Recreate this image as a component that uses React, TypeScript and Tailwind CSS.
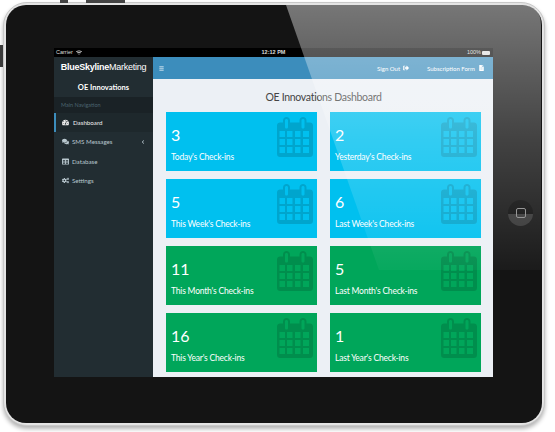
import React from "react";
import { FaBars, FaCogs, FaComments, FaFileAlt, FaTable, FaSignOutAlt, FaTachometerAlt, FaWifi, FaChevronLeft } from "react-icons/fa";

const cards = [
  { value: "3", label: "Today's Check-ins", blue: true },
  { value: "2", label: "Yesterday's Check-ins", blue: true },
  { value: "5", label: "This Week's Check-ins", blue: true },
  { value: "6", label: "Last Week's Check-ins", blue: true },
  { value: "11", label: "This Month's Check-ins", blue: false },
  { value: "5", label: "Last Month's Check-ins", blue: false },
  { value: "16", label: "This Year's Check-ins", blue: false },
  { value: "1", label: "Last Year's Check-ins", blue: false },
];

const navItems = [
  { label: "SMS Messages", icon: FaComments, arrow: true },
  { label: "Database", icon: FaTable, arrow: false },
  { label: "Settings", icon: FaCogs, arrow: false },
];

function CalendarIcon() {
  return (
    <svg viewBox="0 0 36 40" className="w-[36px] h-[40px] shrink-0 mt-[5px] mr-[4px]">
      <path
        fillRule="evenodd"
        fill="#000"
        fillOpacity="0.14"
        d="M6 5.5V3.5C6 1.5 7.5 0 9.5 0S13 1.5 13 3.5V5.5H22.5V3.5C22.5 1.5 24 0 26 0S29.5 1.5 29.5 3.5V5.5H33C34.7 5.5 36 6.8 36 8.5V37C36 38.7 34.7 40 33 40H3C1.3 40 0 38.7 0 37V8.5C0 6.8 1.3 5.5 3 5.5ZM8 3.5V10C8 11 8.7 11.5 9.5 11.5S11 11 11 10V3.5C11 2.5 10.3 2 9.5 2S8 2.5 8 3.5ZM24.5 3.5V10C24.5 11 25.2 11.5 26 11.5S27.5 11 27.5 10V3.5C27.5 2.5 26.8 2 26 2S24.5 2.5 24.5 3.5ZM2.5 14V20H8V14ZM10 14V20H15.5V14ZM18 14V20H23.5V14ZM26 14V20H32V14ZM2.5 22V28H8V22ZM10 22V28H15.5V22ZM18 22V28H23.5V22ZM26 22V28H32V22ZM2.5 30V36H8V30ZM10 30V36H15.5V30ZM18 30V36H23.5V30ZM26 30V36H32V30Z"
      />
    </svg>
  );
}

export default function App() {
  return (
    <div className="relative w-[555px] h-[432px] overflow-hidden bg-white">
      {/* side and top hardware buttons */}
      <div className="absolute left-0 top-[45px] w-[3px] h-[22px] bg-[#3a3a3a]" />
      <div className="absolute left-[60px] top-0 w-[8px] h-[3px] bg-[#444]" />
      <div className="absolute left-[86px] top-0 w-[39px] h-[3px] bg-[#444]" />

      <div className="ml-[3px] mt-[2px] w-[542px] h-[424px] rounded-[24px] bg-[#e4e4e4] border border-[#c8c8c8] p-[2px] shadow-[0_3px_4px_rgba(0,0,0,0.3)]">
        <div className="relative w-full h-full rounded-[20px] bg-[#141414] pl-[48px] pt-[43px]">
          <div className="w-[439px] flex flex-col text-white font-['Lato',sans-serif]">
            {/* status bar */}
            <div className="h-[9px] bg-black flex items-center justify-between px-[2px] text-[5.5px] leading-none text-[#ddd] font-['Liberation_Sans',sans-serif]">
              <div className="flex items-center gap-[3px] w-[100px]">
                Carrier <FaWifi className="w-[6px] h-[5px]" />
              </div>
              <span className="font-bold">12:12 PM</span>
              <div className="flex items-center justify-end gap-[1px] w-[100px] pr-[1px]">
                100%
                <span className="w-[8px] h-[4px] bg-[#ddd] rounded-[1px]" />
              </div>
            </div>

            <div className="flex h-[320px]">
              {/* sidebar */}
              <aside className="w-[99px] bg-[#222d32] flex flex-col shrink-0">
                <div className="h-[22px] flex items-center justify-center text-[9px] tracking-[-0.25px] font-['Liberation_Sans',sans-serif] whitespace-nowrap">
                  <b>BlueSkyline</b>
                  <span>Marketing</span>
                </div>
                <div className="h-[18px] flex items-center justify-center text-[7.5px] font-bold">
                  OE Innovations
                </div>
                <div className="h-[16px] flex items-center pl-[7px] bg-[#1a2226] text-[5.5px] text-[#4b646f]">
                  Main Navigation
                </div>
                <div className="h-[19px] flex items-center gap-[3px] pl-[6px] bg-[#1e282c] border-l-2 border-[#3c8dbc] text-[6.2px] text-[#f0f0f0]">
                  <FaTachometerAlt className="w-[7px] h-[7px]" />
                  <span className="ml-[1px]">Dashboard</span>
                </div>
                {navItems.map((item) => {
                  const Icon = item.icon;
                  return (
                    <div key={item.label} className="h-[19.5px] flex items-center gap-[3px] pl-[8px] pr-[8px] text-[6.2px] text-[#b8c7ce]">
                      <Icon className="w-[7px] h-[7px]" />
                      <span className="flex-1">{item.label}</span>
                      {item.arrow && <FaChevronLeft className="w-[4px] h-[4px]" />}
                    </div>
                  );
                })}
              </aside>

              {/* main */}
              <main className="flex-1 flex flex-col bg-[#ecf0f5]">
                <header className="h-[22px] bg-[#3c8dbc] flex items-center pl-[6px] pr-[9px] text-[6px]">
                  <FaBars className="w-[5px] h-[5px]" />
                  <div className="flex-1" />
                  <span>Sign Out</span>
                  <FaSignOutAlt className="w-[6px] h-[6px] ml-[3px]" />
                  <span className="ml-[18px]">Subscription Form</span>
                  <FaFileAlt className="w-[5px] h-[6px] ml-[4px]" />
                </header>
                <div className="pl-[13px] pr-[12px]">
                  <h1 className="h-[33px] pt-[10px] text-center text-[10.5px] tracking-[-0.3px] leading-[17px] text-[#444]">
                    OE Innovations Dashboard
                  </h1>
                  <div className="grid grid-cols-2 gap-x-[13px] gap-y-[8px]">
                    {cards.map((card) => (
                      <div
                        key={card.label}
                        className={`h-[59px] flex justify-between pl-[5px] ${card.blue ? "bg-[#00c0ef]" : "bg-[#00a65a]"}`}
                      >
                        <div>
                          <div className="mt-[13px] text-[16px] leading-[20px]">{card.value}</div>
                          <div className="mt-[6px] text-[8.5px] tracking-[-0.2px] leading-[12px] whitespace-nowrap">{card.label}</div>
                        </div>
                        <CalendarIcon />
                      </div>
                    ))}
                  </div>
                </div>
              </main>
            </div>
          </div>

          {/* home button */}
          <div className="absolute left-[502px] top-[195px] w-[25px] h-[26px] rounded-full bg-gradient-to-b from-[#0a0a0a] from-55% to-[#333333] to-55% flex items-center justify-center">
            <div className="w-[10px] h-[10px] rounded-[2px] border border-[#8a8a8a]" />
          </div>
        </div>
      </div>

      {/* glass reflection */}
      <svg className="absolute inset-0 pointer-events-none" width="555" height="432">
        <defs>
          <linearGradient id="gloss" x1="0" y1="0" x2="0" y2="1">
            <stop offset="0" stopColor="#fff" stopOpacity="0.42" />
            <stop offset="0.5" stopColor="#fff" stopOpacity="0.2" />
            <stop offset="1" stopColor="#fff" stopOpacity="0.03" />
          </linearGradient>
        </defs>
        <path d="M286 5H521Q541 5 541 25V270H379Z" fill="url(#gloss)" />
      </svg>
    </div>
  );
}
